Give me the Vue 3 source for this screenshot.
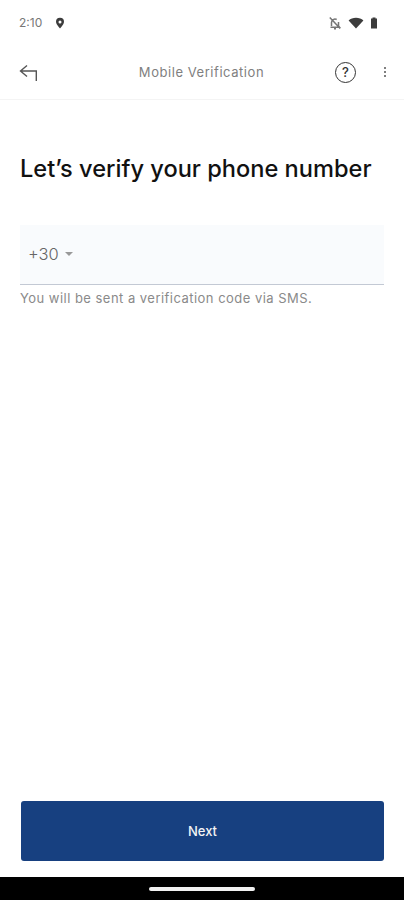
<template>
  <div class="screen">
    <div class="status-bar">
      <div class="status-left">
        <span class="clock">2:10</span>
        <svg class="pin" width="10" height="12" viewBox="0 0 10 12">
          <path fill-rule="evenodd" fill="#3c3c3c" d="M5 .8A4 4 0 0 0 1 4.800c0 2.600 4 6.600 4 6.600s4-4 4-6.600a4 4 0 0 0-4-4zm0 2.600a1.500 1.500 0 1 1 0 3 1.500 1.500 0 0 1 0-3z" />
        </svg>
      </div>
      <div class="status-right">
        <svg width="14" height="14" viewBox="0 0 14 14">
          <path fill="none" stroke="#777" stroke-width="1.500" d="M3.500 10V6.500a3.500 3.500 0 0 1 5.200-3M10.500 6v4l1 1.200H2.500M6 12.800h2M1.800 1.500l10.400 11" />
        </svg>
        <svg width="16" height="12" viewBox="0 0 16 12">
          <path fill="#3c3c3c" d="M.6 3.600C2.500 1.800 5 .8 8 .8s5.500 1 7.400 2.800L8 11.500z" />
        </svg>
        <svg width="8" height="12" viewBox="0 0 8 12">
          <path fill="#3c3c3c" d="M2.500.5h3v1h1.500v10H1v-10h1.500z" />
        </svg>
      </div>
    </div>

    <header class="toolbar">
      <svg class="back" width="22" height="22" viewBox="0 0 22 22">
        <path fill="none" stroke="#555" stroke-width="1.400" d="M9 3.500 2.500 9 9 14.500M2.500 9H18.300v10" />
      </svg>
      <span class="title">Mobile Verification</span>
      <div class="help">?</div>
      <div class="more"><i></i><i></i><i></i></div>
    </header>

    <main class="content">
      <h1>Let’s verify your phone number</h1>
      <div class="phone-field">
        <span class="code">+30</span>
        <span class="caret"></span>
      </div>
      <p class="hint">You will be sent a verification code via SMS.</p>
    </main>

    <div class="footer">
      <button type="button" class="next">Next</button>
    </div>

    <div class="nav-bar"><span class="home"></span></div>
  </div>
</template>

<script setup>
</script>

<style>
body {
  margin: 0;
  background: #fff;
}
</style>

<style scoped>
.screen {
  width: 404px;
  height: 900px;
  display: flex;
  flex-direction: column;
  font-family: Inter, "Liberation Sans", sans-serif;
  background: #fff;
  overflow: hidden;
}

.status-bar {
  height: 45px;
  flex: none;
  display: flex;
  align-items: center;
  justify-content: space-between;
  padding: 0 26px 0 19px;
}

.status-left {
  display: flex;
  align-items: center;
  gap: 13px;
}

.clock {
  font-size: 12px;
  color: #777;
}

.status-right {
  display: flex;
  align-items: center;
  gap: 6px;
}

.toolbar {
  height: 54px;
  flex: none;
  display: flex;
  align-items: center;
  padding: 0 18px 0 18px;
  border-bottom: 1px solid #f4f4f4;
}

.back {
  flex: none;
  margin-top: 1px;
}

.title {
  flex: 1;
  text-align: center;
  font-size: 13px;
  letter-spacing: 0.55px;
  color: #808080;
  padding-left: 52px;
}

.help {
  width: 19px;
  height: 19px;
  flex: none;
  border: 1.500px solid #333;
  border-radius: 50%;
  display: flex;
  align-items: center;
  justify-content: center;
  font-size: 13px;
  font-weight: 500;
  color: #333;
  margin-left: 24px;
}

.more {
  width: 2px;
  flex: none;
  display: flex;
  flex-direction: column;
  gap: 2px;
  margin-left: 28px;
}

.more i {
  width: 2px;
  height: 2px;
  border-radius: 50%;
  background: #555;
}

.content {
  flex: 1;
  padding: 0 20px;
}

h1 {
  margin: 54px 0 41px;
  font-size: 23.600px;
  line-height: 30px;
  font-weight: 500;
  color: #111;
  white-space: nowrap;
}

.phone-field {
  height: 59px;
  display: flex;
  align-items: center;
  gap: 6px;
  padding-left: 8px;
  background: #f9fbfd;
  border-bottom: 1px solid #c3c9d4;
}

.code {
  font-size: 16.500px;
  font-weight: 300;
  color: #666;
  padding-bottom: 2px;
}

.caret {
  width: 0;
  height: 0;
  border-left: 4px solid transparent;
  border-right: 4px solid transparent;
  border-top: 4px solid #999;
  margin-bottom: 2px;
}

.hint {
  margin: 5px 0 0;
  font-size: 13px;
  line-height: 16px;
  color: #8a8a8a;
  letter-spacing: 0.47px;
}

.footer {
  flex: none;
  padding: 0 20px 16px 21px;
}

.next {
  display: block;
  width: 100%;
  height: 60px;
  border: none;
  border-radius: 3px;
  background: #174080;
  color: #f4f4f4;
  font-family: inherit;
  font-size: 13px;
  font-weight: 500;
}

.nav-bar {
  height: 23px;
  flex: none;
  background: #000;
  display: flex;
  justify-content: center;
  align-items: center;
}

.home {
  width: 106px;
  height: 4px;
  border-radius: 2px;
  background: #f2f2f2;
}
</style>
